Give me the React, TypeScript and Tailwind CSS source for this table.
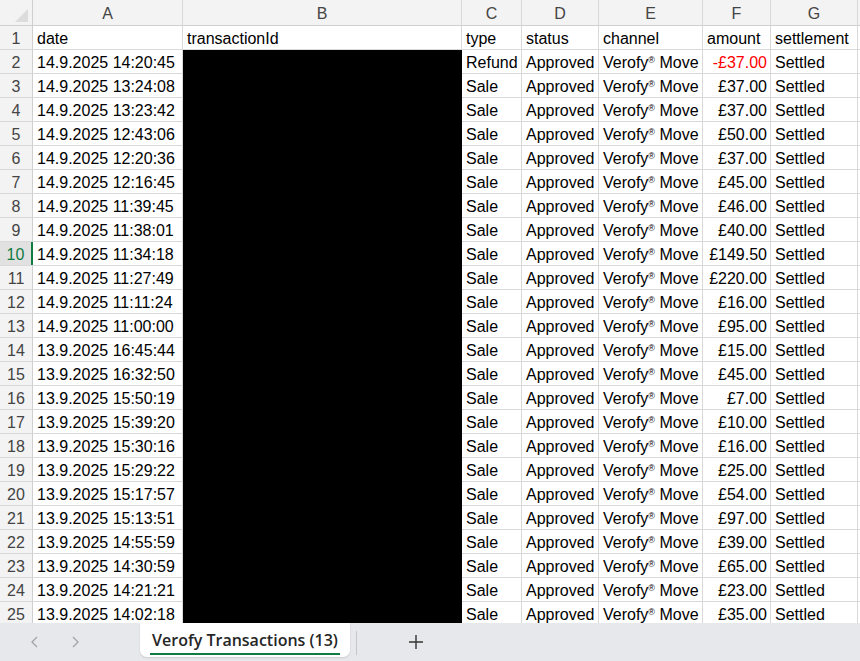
import React from "react";

const rows: [string, string, string][] = [
  ["14.9.2025 14:20:45", "Refund", "-£37.00"],
  ["14.9.2025 13:24:08", "Sale", "£37.00"],
  ["14.9.2025 13:23:42", "Sale", "£37.00"],
  ["14.9.2025 12:43:06", "Sale", "£50.00"],
  ["14.9.2025 12:20:36", "Sale", "£37.00"],
  ["14.9.2025 12:16:45", "Sale", "£45.00"],
  ["14.9.2025 11:39:45", "Sale", "£46.00"],
  ["14.9.2025 11:38:01", "Sale", "£40.00"],
  ["14.9.2025 11:34:18", "Sale", "£149.50"],
  ["14.9.2025 11:27:49", "Sale", "£220.00"],
  ["14.9.2025 11:11:24", "Sale", "£16.00"],
  ["14.9.2025 11:00:00", "Sale", "£95.00"],
  ["13.9.2025 16:45:44", "Sale", "£15.00"],
  ["13.9.2025 16:32:50", "Sale", "£45.00"],
  ["13.9.2025 15:50:19", "Sale", "£7.00"],
  ["13.9.2025 15:39:20", "Sale", "£10.00"],
  ["13.9.2025 15:30:16", "Sale", "£16.00"],
  ["13.9.2025 15:29:22", "Sale", "£25.00"],
  ["13.9.2025 15:17:57", "Sale", "£54.00"],
  ["13.9.2025 15:13:51", "Sale", "£97.00"],
  ["13.9.2025 14:55:59", "Sale", "£39.00"],
  ["13.9.2025 14:30:59", "Sale", "£65.00"],
  ["13.9.2025 14:21:21", "Sale", "£23.00"],
  ["13.9.2025 14:02:18", "Sale", "£35.00"],
];

const cell = "h-full flex items-center pt-[2px] border-r border-[#d9d9d9] px-[4px] whitespace-nowrap overflow-hidden";

function Channel() {
  return (
    <span>
      Verofy<span className="text-[9px] relative top-[-5px]">®</span> Move
    </span>
  );
}

export default function App() {
  return (
    <div
      className="w-[860px] h-[661px] bg-white overflow-hidden flex flex-col text-black"
      style={{ fontFamily: '"Liberation Sans", Arial, sans-serif' }}
    >
      <div className="h-[623px] overflow-hidden flex flex-col">
        {/* column header */}
        <div className="flex h-[26px] shrink-0 bg-[#f3f3f3] border-b border-[#cfcfcf] text-[16px] text-[#444]">
          <div className="w-[33px] h-full border-r border-[#cfcfcf] relative">
            <div
              className="absolute bg-[#dcdcdc]"
              style={{ left: 15, top: 9, width: 13, height: 13, clipPath: "polygon(100% 0, 100% 100%, 0 100%)" }}
            />
          </div>
          {[
            ["A", "w-[150px]"],
            ["B", "w-[279px]"],
            ["C", "w-[60px]"],
            ["D", "w-[77px]"],
            ["E", "w-[104px]"],
            ["F", "w-[68px]"],
            ["G", "w-[87px]"],
          ].map(([l, w]) => (
            <div key={l} className={`${w} h-full flex items-center justify-center pt-[2px] border-r border-[#d9d9d9]`}>
              {l}
            </div>
          ))}
          <div className="flex-1" />
        </div>
        {/* header row 1 */}
        <div className="flex h-[24px] shrink-0 border-b border-[#d9d9d9] text-[16px]">
          <div className="w-[33px] h-full flex items-center justify-center pt-[2px] bg-[#f3f3f3] border-r border-[#cfcfcf] text-[#444]">1</div>
          <div className={`${cell} w-[150px]`}>date</div>
          <div className={`${cell} w-[279px]`}>transactionId</div>
          <div className={`${cell} w-[60px]`}>type</div>
          <div className={`${cell} w-[77px]`}>status</div>
          <div className={`${cell} w-[104px]`}>channel</div>
          <div className={`${cell} w-[68px]`}>amount</div>
          <div className={`${cell} w-[87px]`}>settlement</div>
          <div className="flex-1" />
        </div>
        {rows.map((r, i) => {
          const n = i + 2;
          const active = n === 10;
          return (
            <div key={n} className="flex h-[24px] shrink-0 border-b border-[#d9d9d9] text-[16px]">
              <div
                className={
                  active
                    ? "w-[33px] h-full flex items-center justify-center pt-[2px] bg-[#e1e1e1] border-r-2 border-[#107c41] text-[#107c41]"
                    : "w-[33px] h-full flex items-center justify-center pt-[2px] bg-[#f3f3f3] border-r border-[#cfcfcf] text-[#444]"
                }
              >
                {n}
              </div>
              <div className={`${cell} w-[150px]`}>{r[0]}</div>
              <div className="w-[279px] h-[25px] bg-black -mb-px" />
              <div className={`${cell} w-[60px]`}>{r[1]}</div>
              <div className={`${cell} w-[77px]`}>Approved</div>
              <div className={`${cell} w-[104px]`}>
                <Channel />
              </div>
              <div className={`${cell} w-[68px] justify-end pr-[3px] ${r[2].startsWith("-") ? "text-[#ff0000]" : ""}`}>
                {r[2]}
              </div>
              <div className={`${cell} w-[87px]`}>Settled</div>
              <div className="flex-1" />
            </div>
          );
        })}
      </div>
      {/* sheet tab bar */}
      <div className="h-[38px] bg-[#e6e8eb] flex items-start relative">
        <div className="w-[140px] h-full flex items-center text-[#a3a3a3]">
          <svg className="ml-[29px]" width="12" height="14" viewBox="0 0 12 14" fill="none" stroke="currentColor" strokeWidth="1.3">
            <path d="M8 2 L3 7 L8 12" />
          </svg>
          <svg className="ml-[28px]" width="12" height="14" viewBox="0 0 12 14" fill="none" stroke="currentColor" strokeWidth="1.3">
            <path d="M4 2 L9 7 L4 12" />
          </svg>
        </div>
        <div className="w-[210px] h-[34px] bg-white rounded-b-[7px] shadow-[0_1px_2px_rgba(0,0,0,0.12)] flex flex-col items-center">
          <div
            className="h-[30px] flex items-center text-[16px] font-semibold text-[#262626] pt-[4px]"
            style={{ fontFamily: '"Open Sans", "Liberation Sans", sans-serif' }}
          >
            Verofy Transactions (13)
          </div>
          <div className="w-[190px] h-[2px] bg-[#107c41]" />
        </div>
        <div className="w-px h-[24px] bg-[#c6c6c6] mt-[8px] ml-[6px]" />
        <div className="ml-[51px] h-full flex items-center">
          <svg width="16" height="16" viewBox="0 0 16 16" stroke="#333" strokeWidth="1.4">
            <path d="M8 1 V15 M1 8 H15" />
          </svg>
        </div>
      </div>
    </div>
  );
}
